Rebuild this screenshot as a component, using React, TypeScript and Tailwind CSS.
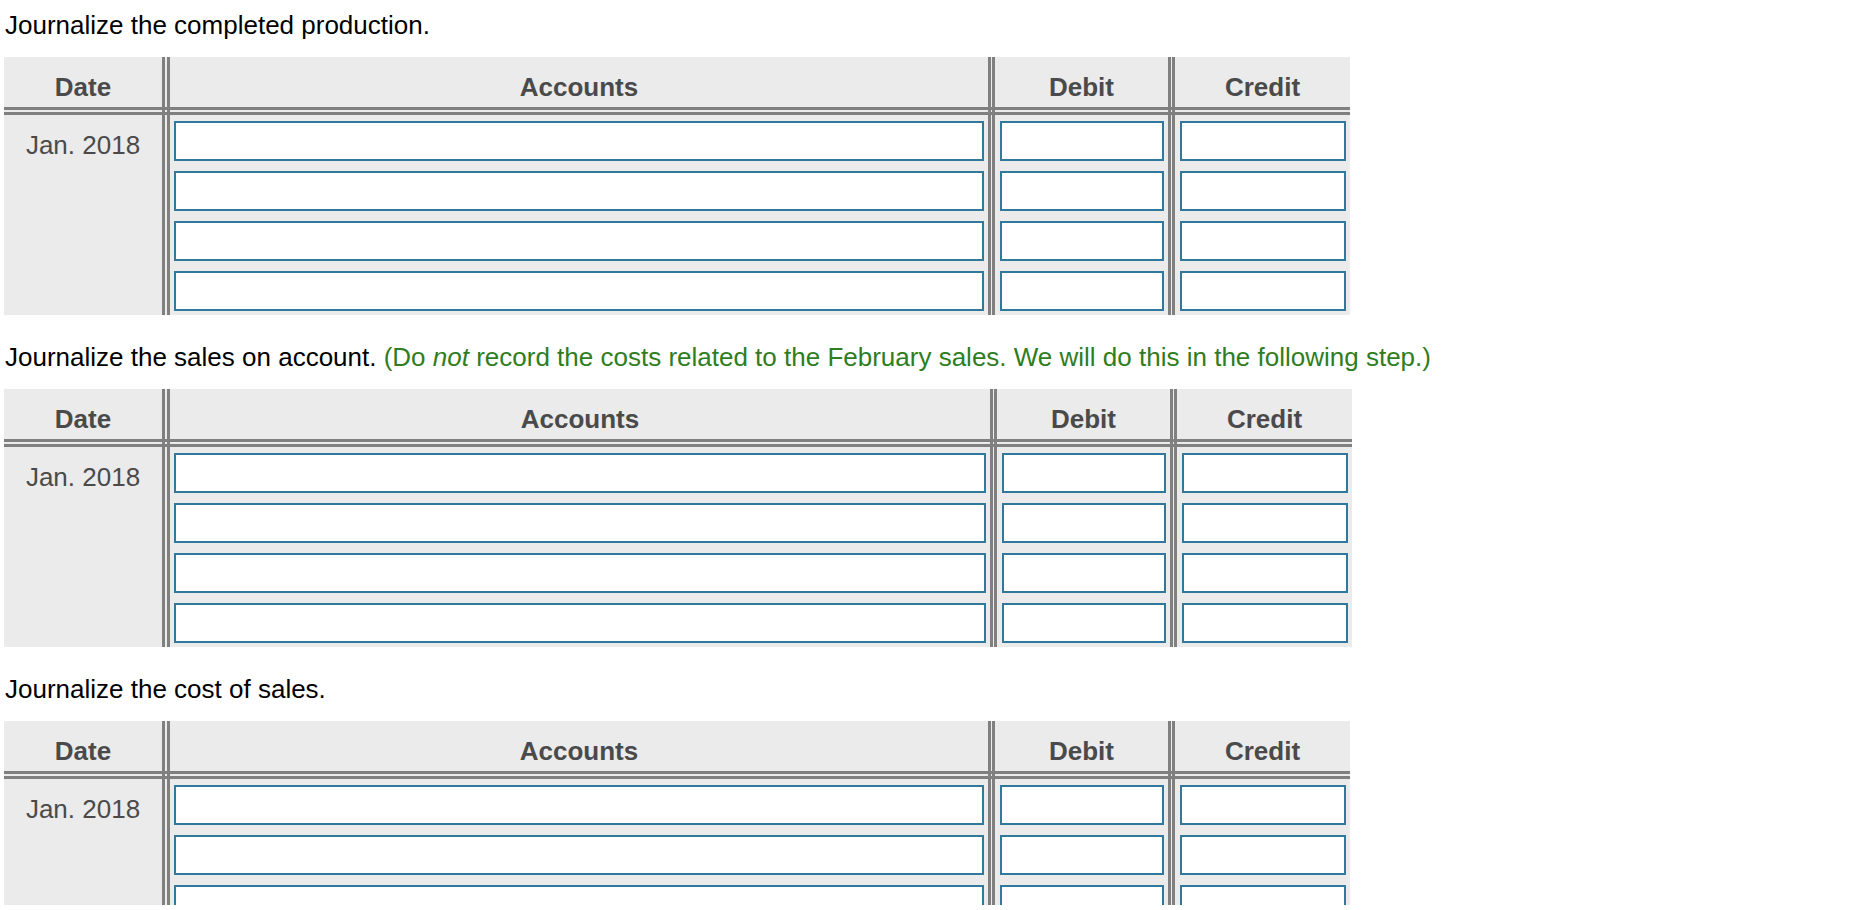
import React from "react";

const SepV = ({ col }: { col: string }) => (
  <div className={`${col} row-span-full border-x-[3px] border-[#808080]`} />
);

function JournalTable({ wide, rows }: { wide?: boolean; rows: number }) {
  const grid = wide
    ? "grid grid-cols-[158px_8px_820px_7px_173px_7px_175px] grid-rows-[50px_8px_200px]"
    : "grid grid-cols-[158px_8px_818px_7px_173px_7px_175px] grid-rows-[50px_8px_200px]";
  const head = "row-start-1 flex items-end justify-center pb-[5px] font-bold text-[#4a4a4a] leading-[30px]";
  const inputCls = "block w-full h-[40px] bg-white border-2 border-[#31789b] outline-none";
  const list = Array.from({ length: rows });
  return (
    <div className={`${grid} bg-[#ebebeb] w-fit`}>
      <div className={`${head} col-start-1`}>Date</div>
      <div className={`${head} col-start-3`}>Accounts</div>
      <div className={`${head} col-start-5`}>Debit</div>
      <div className={`${head} col-start-7`}>Credit</div>
      <div className="row-start-2 col-span-full border-y-[3px] border-[#808080]" />
      <SepV col="col-start-2" />
      <SepV col="col-start-4" />
      <SepV col="col-start-6" />
      <div className="row-start-3 col-start-1 pt-[15px] text-center text-[#4a4a4a] leading-[30px]">Jan. 2018</div>
      <div className="row-start-3 col-start-3 flex flex-col gap-[10px] pt-[6px] px-[4px] overflow-hidden">
        {list.map((_, i) => (
          <input key={i} className={inputCls} type="text" />
        ))}
      </div>
      <div className="row-start-3 col-start-5 flex flex-col gap-[10px] pt-[6px] pl-[5px] pr-[4px] overflow-hidden">
        {list.map((_, i) => (
          <input key={i} className={inputCls} type="text" />
        ))}
      </div>
      <div className="row-start-3 col-start-7 flex flex-col gap-[10px] pt-[6px] pl-[5px] pr-[4px] overflow-hidden">
        {list.map((_, i) => (
          <input key={i} className={inputCls} type="text" />
        ))}
      </div>
    </div>
  );
}

export default function App() {
  return (
    <div className="bg-white h-[910px]">
      <div className="h-[905px] overflow-hidden bg-white pl-[4px] pt-[10px] text-[26px] text-black font-['Liberation_Sans',Arial,sans-serif]">
        <p className="leading-[30px] pl-[1px]">Journalize the completed production.</p>
        <div className="mt-[17px]">
          <JournalTable rows={4} />
        </div>
        <p className="mt-[27px] leading-[30px] pl-[1px]">
          Journalize the sales on account.{" "}
          <span className="text-[#2f7d21]">
            (Do <em className="italic">not</em> record the costs related to the February sales. We will do this in the following step.)
          </span>
        </p>
        <div className="mt-[17px]">
          <JournalTable wide rows={4} />
        </div>
        <p className="mt-[27px] leading-[30px] pl-[1px]">Journalize the cost of sales.</p>
        <div className="mt-[17px]">
          <JournalTable rows={4} />
        </div>
      </div>
    </div>
  );
}
